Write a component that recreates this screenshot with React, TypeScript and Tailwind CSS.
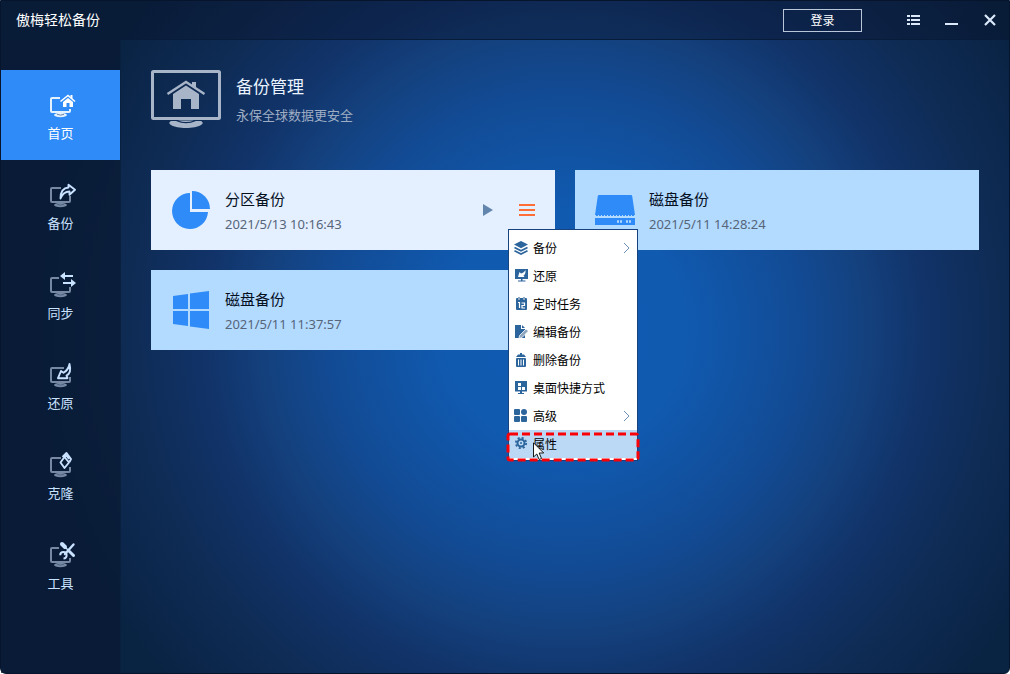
import type { ReactNode } from 'react';

interface NavItem {
  label: string;
  glyph: ReactNode;
  frame: string;
}

interface MenuItem {
  label: string;
  icon: ReactNode;
  hasSubmenu?: boolean;
}

const NAV_ITEMS: NavItem[] = [
  {
    label: '首页',
    frame: 'M15 5H7Q6 5 6 6V18Q6 19 7 19H24Q25 19 25 18V16',
    glyph: (
      <>
        <path d="M15.5 8.5L23 2.500l7 6" fill="none" stroke="currentColor" strokeWidth="1.6" />
        <path d="M18 9l5-4 5 4v5h-3.500v-4h-3v4H18z" fill="currentColor" />
        <path d="M25.500 2h2v4l-2-1.500z" fill="currentColor" />
      </>
    ),
  },
  {
    label: '备份',
    frame: 'M16 5H7Q6 5 6 6V18Q6 19 7 19H24Q25 19 25 18V13',
    glyph: (
      <path
        d="M15.500 15.500C15.500 8.500 18 5 23.500 4.500V1.800L30 6.800 24.500 11.800V8.500C20 8.500 17.500 10.500 15.500 15.500z"
        fill="none"
        stroke="currentColor"
        strokeWidth="1.900"
        strokeLinejoin="round"
      />
    ),
  },
  {
    label: '同步',
    frame: 'M14 5H7Q6 5 6 6V18Q6 19 7 19H24Q25 19 25 18V14',
    glyph: (
      <>
        <path d="M18 3H28M18 10h10" stroke="currentColor" strokeWidth="2" />
        <path d="M15 3l5-4v8zM31 10l-5-4v8z" fill="currentColor" />
      </>
    ),
  },
  {
    label: '还原',
    frame: 'M19 5H7Q6 5 6 6V18Q6 19 7 19H24Q25 19 25 18V14',
    glyph: (
      <path
        d="M24.500 1C26 7 25 11 21.500 12.500L22.500 15.200 13 15.200 16 8 18.500 9.800C21.500 8 23.800 5.500 24.500 1z"
        fill="none"
        stroke="currentColor"
        strokeWidth="1.900"
        strokeLinejoin="round"
      />
    ),
  },
  {
    label: '克隆',
    frame: 'M16 5H7Q6 5 6 6V18Q6 19 7 19H24Q25 19 25 18V14',
    glyph: (
      <g fill="none" stroke="currentColor" strokeWidth="1.900" strokeLinejoin="round">
        <path d="M19.500 4L24 9.500 19.500 15 15.500 9.500z" />
        <path d="M17.500 4L21.500 0 26 6l-1.500 3M19.500 4l2-1.500L24 6" />
      </g>
    ),
  },
  {
    label: '工具',
    frame: 'M14 5H7Q6 5 6 6V18Q6 19 7 19H24Q25 19 25 18V15',
    glyph: (
      <>
        <path d="M17 1l3 3" stroke="currentColor" strokeWidth="4" strokeLinecap="round" />
        <path d="M20 4l4 4" stroke="currentColor" strokeWidth="1.500" />
        <path d="M24.500 8.500l4 4" stroke="currentColor" strokeWidth="3" strokeLinecap="round" />
        <path d="M28.500 1.500L20 11" stroke="currentColor" strokeWidth="2.400" strokeLinecap="round" />
        <path d="M15.200 12.200A3.200 3.200 0 1 1 18.500 15.500" fill="none" stroke="currentColor" strokeWidth="2" />
      </>
    ),
  },
];

const MENU_ITEMS: MenuItem[] = [
  {
    label: '备份',
    hasSubmenu: true,
    icon: (
      <>
        <path d="M7 0l7 3.600L7 7.200 0 3.600z" fill="currentColor" />
        <path d="M.5 6.500L7 9.800l6.500-3.300M.5 9.700L7 13l6.500-3.300" fill="none" stroke="currentColor" strokeWidth="1.700" />
      </>
    ),
  },
  {
    label: '还原',
    icon: (
      <>
        <path d="M1 0h13v10H1zM7 10h1.500v2H7zM4 11.500h7.500v1H4z" fill="currentColor" />
        <path d="M11.500 1c.3 3-.5 4.500-2 5.500l1 1.500H4l1.500-5L7 4.500C9 4 10.500 3 11.500 1z" fill="#fff" />
      </>
    ),
  },
  {
    label: '定时任务',
    icon: (
      <>
        <rect x="2" y="1" width="11" height="12" rx="1" fill="currentColor" />
        <path d="M4 0h2v3H4zM9 0h2v3H9z" fill="#8fa9c4" />
        <path d="M4 5.500h1.500V11M7.500 6h3v2.500H8V11h3" fill="none" stroke="#fff" strokeWidth="1.200" />
      </>
    ),
  },
  {
    label: '编辑备份',
    icon: (
      <>
        <path d="M1 0h6v4h4v9H1z" fill="currentColor" />
        <path d="M8 0l3 3H8z" fill="currentColor" />
        <path d="M5 13.500l.5-3L12 4l2.500 2L8 12.500z" fill="#8fa6bf" stroke="#fff" strokeWidth=".8" />
      </>
    ),
  },
  {
    label: '删除备份',
    icon: (
      <>
        <path d="M6 0h2v1.500h2L12 4H2l2-2.500h2z" fill="currentColor" />
        <rect x="2" y="5" width="10" height="9" rx="1" fill="currentColor" />
        <path d="M4.500 6.500v6M7 6.500v6M9.500 6.500v6" stroke="#fff" />
      </>
    ),
  },
  {
    label: '桌面快捷方式',
    icon: (
      <>
        <path d="M1 0h12v10.500H1zM6 10.500h2V12H6zM4 12h6v1H4z" fill="currentColor" />
        <path d="M4 2h3v3H4zM4 6h3v3H4zM8 6h3v3H8z" fill="#fff" />
      </>
    ),
  },
  {
    label: '高级',
    hasSubmenu: true,
    icon: (
      <g fill="currentColor">
        <rect x="0" y="0" width="6" height="6" rx="1" />
        <circle cx="10" cy="3" r="3" />
        <rect x="0" y="7" width="6" height="6" rx="1" />
        <rect x="7" y="7" width="6" height="6" rx="1" />
      </g>
    ),
  },
  {
    label: '属性',
    icon: (
      <g fill="none" stroke="currentColor">
        <circle cx="7" cy="6" r="5.200" strokeWidth="1.800" strokeDasharray="2.100 1.984" />
        <circle cx="7" cy="6" r="3.500" strokeWidth="2" />
        <circle cx="7" cy="6" r="1" fill="currentColor" stroke="none" />
      </g>
    ),
  },
];

const PieIcon = () => (
  <svg viewBox="0 0 40 40" className="h-10 w-10 text-[#2e8bf7]" fill="currentColor">
    <path d="M19 3v19h18A18 18 0 1 1 19 3z" />
    <path d="M21 1a18 18 0 0 1 18 18H21z" />
  </svg>
);

const DriveIcon = () => (
  <svg viewBox="0 0 40 40" className="h-10 w-10 text-[#2e8bf7]" fill="currentColor">
    <path d="M4 5h32q1 0 1.200 1L40 25H0L2.800 6Q3 5 4 5zM0 28h40v7H0z" />
    <path d="M22 31.500h6M31 31.500h5" stroke="#b3daff" strokeWidth="2.500" strokeDasharray="2 1" />
    <path d="M1 25.500h38" stroke="currentColor" strokeDasharray="2 1" />
  </svg>
);

const WindowsIcon = () => (
  <svg viewBox="0 0 40 40" className="h-10 w-10 text-[#2e8bf7]" fill="currentColor">
    <path d="M2 6l15-2v15H2zM19 3.500L38 1v18H19zM2 21h15v15L2 34zM19 21h19v18l-19-2.500z" />
  </svg>
);

const NavButton = ({ item, active }: { item: NavItem; active: boolean }) => (
  <button
    type="button"
    aria-current={active ? 'page' : undefined}
    className={`flex h-[90px] w-full flex-col items-center pt-[23px] ${active ? 'bg-[#2e8bf7] text-white' : 'text-[#c9e2ff]'}`}
  >
    <svg viewBox="0 0 31 26" className="h-[26px] w-[31px] overflow-visible">
      <g className={active ? 'text-[#e4f1ff]' : 'text-[#7788a3]'}>
        <path d={item.frame} fill="none" stroke="currentColor" strokeWidth="2" />
        <ellipse cx="15.500" cy="22" rx="6.500" ry="2.200" fill="currentColor" />
        <path d="M12 21.300q3.500 1.600 7 0" fill="none" stroke="#3d5878" strokeWidth=".7" />
      </g>
      {item.glyph}
    </svg>
    <span className="mt-1 text-[13px] leading-5">{item.label}</span>
  </button>
);

const ContextMenu = () => (
  <div
    role="menu"
    className="absolute top-[59px] right-[-83px] z-10 w-[130px] border border-[#17427f] bg-white pt-1 pb-0.5"
  >
    {MENU_ITEMS.map((item, index) => {
      const selected = index === MENU_ITEMS.length - 1;
      return (
        <button
          key={item.label}
          type="button"
          role="menuitem"
          className={`relative flex h-7 w-full items-center gap-[5px] pr-[7px] pl-[5px] text-left text-xs text-black ${selected ? 'bg-[#bbd9f5]' : ''}`}
        >
          <svg viewBox="0 0 14 14" className="h-3.5 w-3.5 shrink-0 text-[#2c659c]">
            {item.icon}
          </svg>
          <span className="flex-1 pt-px whitespace-nowrap">{item.label}</span>
          {item.hasSubmenu && (
            <svg viewBox="0 0 10 10" className="h-2.5 w-2.5" fill="none" stroke="#6d8fb8">
              <path d="M4 0l5 5-5 5" />
            </svg>
          )}
          {selected && (
            <>
              <svg className="absolute top-1 left-[-1px] h-[26px] w-[130px] overflow-visible" aria-hidden="true">
                <rect
                  width="100%"
                  height="100%"
                  rx="2"
                  fill="none"
                  stroke="#fb0007"
                  strokeWidth="3"
                  strokeDasharray="8 4"
                />
              </svg>
              <svg viewBox="0 0 12 19" className="absolute top-[12px] left-6 h-[19px] w-3" aria-hidden="true">
                <path
                  d="M.5.800V15l3.300-3 2.300 5.500 2.400-1L6.200 11h4.500z"
                  fill="#fff"
                  stroke="#000"
                  strokeWidth=".9"
                />
              </svg>
            </>
          )}
        </button>
      );
    })}
  </div>
);

interface BackupCardProps {
  title: string;
  date: string;
  icon: ReactNode;
  open?: boolean;
}

const BackupCard = ({ title, date, icon, open = false }: BackupCardProps) => (
  <article className={`relative flex h-20 items-center px-5 ${open ? 'bg-[#e4f0ff]' : 'bg-[#b3daff]'}`}>
    {icon}
    <div className="ml-3.5 flex-1 pt-1">
      <h2 className="text-[15px] leading-[25px] text-[#05101f]">{title}</h2>
      <time className="block text-[13px] leading-[25px] text-[#566579]">{date}</time>
    </div>
    {open && (
      <>
        <button type="button" aria-label="开始备份" className="mr-[26px]">
          <svg viewBox="0 0 10 12" className="h-3 w-2.5">
            <path d="M0 0l10 6-10 6z" fill="#6285ad" />
          </svg>
        </button>
        <button type="button" aria-label="更多操作" aria-haspopup="menu" aria-expanded="true">
          <svg viewBox="0 0 16 12" className="h-3 w-4" stroke="#ff6d38" strokeWidth="2">
            <path d="M0 1h16M0 6h16M0 11h16" />
          </svg>
        </button>
        <ContextMenu />
      </>
    )}
  </article>
);

const App = () => {
  return (
    <div className="bg-white">
      <div className="flex min-h-screen flex-col rounded-b-md border border-[#06152b] bg-[radial-gradient(circle_at_56%_49%,#105cb1_0,#105ab0_120px,#124b95_235px,#14417e_300px,#113369_360px,#0f2c56_430px,#092343_530px)] font-['Noto_Sans','Noto_Sans_CJK_SC',sans-serif]">
        <header className="flex h-[39px] items-center border-b border-[#071c38] bg-[#08152d]/45 pr-[13px] pl-[15px] text-[#dce9fa]">
          <h1 className="flex-1 text-sm text-white">傲梅轻松备份</h1>
          <button type="button" className="mr-[45px] h-[23px] w-[79px] border border-[#b9c6da] pt-px text-xs text-white">
            登录
          </button>
          <button type="button" aria-label="菜单" className="mr-[25px]">
            <svg viewBox="0 0 13 10" className="h-2.5 w-[13px]" stroke="currentColor" strokeWidth="2">
              <path d="M0 1h3M4 1h9M0 5h3M4 5h9M0 9h3M4 9h9" />
            </svg>
          </button>
          <button type="button" aria-label="最小化" className="mr-[26px]">
            <svg viewBox="0 0 13 12" className="h-3 w-[13px]" stroke="currentColor" strokeWidth="2">
              <path d="M0 10h13" />
            </svg>
          </button>
          <button type="button" aria-label="关闭">
            <svg viewBox="0 0 12 12" className="h-3 w-3" stroke="currentColor" strokeWidth="2.200">
              <path d="M1 1l10 10M11 1L1 11" />
            </svg>
          </button>
        </header>

        <div className="flex flex-1">
          <nav className="w-[120px] shrink-0 border-r border-[#09203f] bg-[#091a33]/75 pt-[30px]">
            {NAV_ITEMS.map((item, index) => (
              <NavButton key={item.label} item={item} active={index === 0} />
            ))}
          </nav>

          <main className="min-w-0 flex-1 p-[30px]">
            <div className="mb-[42px] flex h-[58px] gap-[15px]">
              <svg viewBox="0 0 70 58" className="h-[58px] w-[70px] text-[#a8b5c9]" fill="currentColor">
                <rect x="1.500" y="1.500" width="67" height="47" rx="1" fill="none" stroke="currentColor" strokeWidth="3" />
                <path d="M20 51h5q10 4.500 20 0h5c2.500 1.500 2 3 0 4-6 4-24 4-30 0-2-1-2.500-2.500 0-4z" />
                <path d="M27 50.500h16q-8 3-16 0z" />
                <path d="M16.500 24L35 12l18.500 12" fill="none" stroke="currentColor" strokeWidth="2.400" />
                <path d="M22 24l13-8.500L48 24v15h-8V29H30v10h-8zM41 12h4v6l-4-2.500z" />
              </svg>
              <div className="pt-[3px]">
                <h2 className="text-[17px] leading-7 text-[#eaf3ff]">备份管理</h2>
                <p className="text-[13px] leading-7 text-[#9fadc4]">永保全球数据更安全</p>
              </div>
            </div>

            <section className="grid grid-cols-2 gap-5">
              <BackupCard title="分区备份" date="2021/5/13 10:16:43" icon={<PieIcon />} open />
              <BackupCard title="磁盘备份" date="2021/5/11 14:28:24" icon={<DriveIcon />} />
              <BackupCard title="磁盘备份" date="2021/5/11 11:37:57" icon={<WindowsIcon />} />
            </section>
          </main>
        </div>
      </div>
    </div>
  );
};

export default App;
